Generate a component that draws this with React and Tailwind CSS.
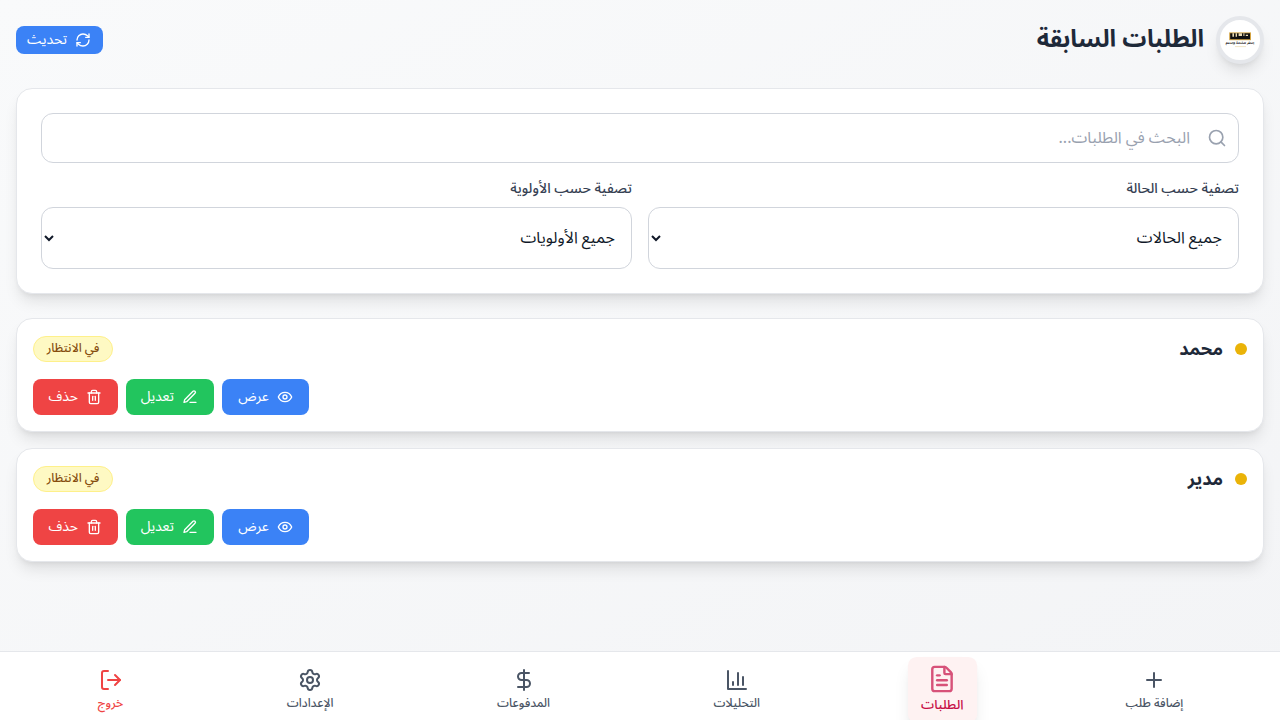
import { RefreshCw, Search, Trash2, Plus, FileText, DollarSign, Settings, LogOut } from 'lucide-react';

function Icon({ className, children }) {
  return (
    <svg className={className} viewBox="0 0 24 24" fill="none" stroke="currentColor" strokeWidth="2" strokeLinecap="round" strokeLinejoin="round">
      {children}
    </svg>
  );
}

function ChartIcon() {
  return (
    <Icon className="size-6">
      <path d="M3 3v18h18" />
      <path d="M18 17V9" />
      <path d="M13 17V5" />
      <path d="M8 17v-3" />
    </Icon>
  );
}

function EyeIcon() {
  return (
    <Icon className="size-4">
      <path d="M2 12s3-7 10-7 10 7 10 7-3 7-10 7-10-7-10-7Z" />
      <circle cx="12" cy="12" r="3" />
    </Icon>
  );
}

function PenIcon() {
  return (
    <Icon className="size-4">
      <path d="M12 20h9" />
      <path d="M16.5 3.5a2.12 2.12 0 0 1 3 3L7 19l-4 1 1-4Z" />
    </Icon>
  );
}

function Logo() {
  return (
    <div className="size-12 rounded-full border-4 border-gray-200 bg-white shadow-lg flex items-center justify-center">
      <svg className="size-10" viewBox="0 0 40 40">
        <rect x="9.2" y="12.4" width="21.8" height="7.8" fill="#d3a343" />
        <rect x="10.2" y="13.3" width="19.8" height="5.9" fill="#111" />
        <path d="M12.4 13.3h1.6v3.4h-1.6zM15.6 13.3h1.4v3.4h-1.4zM18.6 13.3h3.4v2.6h-3.4zM25.8 14.8h2.2v1.3h-2.2zM23.4 13.3h1v2.6h-1z" fill="#ecdcb4" />
        <text x="20" y="24.2" fontSize="3.3" fontWeight="700" textAnchor="middle" fill="#222">الحفر للخدمة والدعم</text>
        <path d="M15 26.6h11" stroke="#e8d3a0" strokeWidth="0.6" />
      </svg>
    </div>
  );
}

function Filter({ label, value }) {
  return (
    <div>
      <label className="block text-sm font-medium text-gray-700 mb-2">{label}</label>
      <select className="block w-full h-[62px] rounded-xl border border-gray-300 bg-white px-3 text-base text-gray-900">
        <option>{value}</option>
      </select>
    </div>
  );
}

const action = 'flex items-center gap-2 h-9 px-4 rounded-lg text-sm text-white whitespace-nowrap';

function RequestCard({ name }) {
  return (
    <div className="h-[114px] bg-white rounded-2xl border border-gray-200 shadow-lg p-4">
      <div className="flex items-center justify-between h-7 mb-4">
        <div className="flex items-center gap-3">
          <span className="size-3 rounded-full bg-[#eab308]" />
          <h3 className="text-lg font-bold text-gray-800">{name}</h3>
        </div>
        <span className="h-[26px] w-20 flex items-center justify-center rounded-full border border-[#fef08a] bg-[#fef9c3] text-xs font-medium text-[#854d0e]">في الانتظار</span>
      </div>
      <div className="flex justify-end gap-2">
        <button className={`${action} bg-[#3b82f6]`}><EyeIcon /><span className="w-[31px]">عرض</span></button>
        <button className={`${action} bg-[#22c55e]`}><PenIcon /><span className="w-8">تعديل</span></button>
        <button className={`${action} bg-[#ef4444]`}><Trash2 className="size-4" /><span className="w-[29px]">حذف</span></button>
      </div>
    </div>
  );
}

function NavItem({ icon, label, className = 'text-gray-600' }) {
  return (
    <button className={`flex flex-col items-center gap-1 px-3 py-2 text-xs font-medium ${className}`}>
      {icon}
      <span>{label}</span>
    </button>
  );
}

export default function App() {
  return (
    <div dir="rtl" className="h-screen overflow-hidden flex flex-col bg-linear-to-br from-[#f9fafb] to-[#f3f4f6] font-['Noto_Sans_Arabic','Noto_Sans',sans-serif]">
      <header className="flex items-center justify-between px-4 h-20">
        <div className="flex items-center gap-3">
          <Logo />
          <h1 className="text-2xl font-bold text-gray-800">الطلبات السابقة</h1>
        </div>
        <button className="flex items-center gap-2 h-7 px-3 rounded-lg bg-[#3b82f6] text-white text-sm whitespace-nowrap">
          <RefreshCw className="size-4" /><span className="w-[39px]">تحديث</span>
        </button>
      </header>
      <main className="flex-1 px-4 pt-2">
        <section className="h-[206px] bg-white rounded-2xl border border-gray-200 shadow-lg p-6 mb-6">
          <div className="flex items-center gap-[17px] h-[50px] rounded-xl border border-gray-300 ps-[11px] pe-3 mb-4">
            <Search className="size-5 text-gray-400" />
            <input className="flex-1 outline-none placeholder:text-gray-400" placeholder="البحث في الطلبات..." />
          </div>
          <div className="grid grid-cols-2 gap-4">
            <Filter label="تصفية حسب الحالة" value="جميع الحالات" />
            <Filter label="تصفية حسب الأولوية" value="جميع الأولويات" />
          </div>
        </section>
        <div className="flex flex-col gap-4">
          <RequestCard name="محمد" />
          <RequestCard name="مدير" />
        </div>
      </main>
      <nav className="h-[69px] bg-white border-t border-gray-200 flex justify-around items-start ps-[15px] pe-4 pt-2">
        <NavItem icon={<Plus className="size-6" />} label="إضافة طلب" />
        <NavItem icon={<FileText className="size-6 opacity-70 scale-110" />} label="الطلبات" className="bg-[#fef2f2] text-[#c70f47] rounded-lg shadow-lg scale-110" />
        <NavItem icon={<ChartIcon />} label="التحليلات" />
        <NavItem icon={<DollarSign className="size-6" />} label="المدفوعات" />
        <NavItem icon={<Settings className="size-6" />} label="الإعدادات" />
        <NavItem icon={<LogOut className="size-6" />} label="خروج" className="text-[#ef4444]" />
      </nav>
    </div>
  );
}
